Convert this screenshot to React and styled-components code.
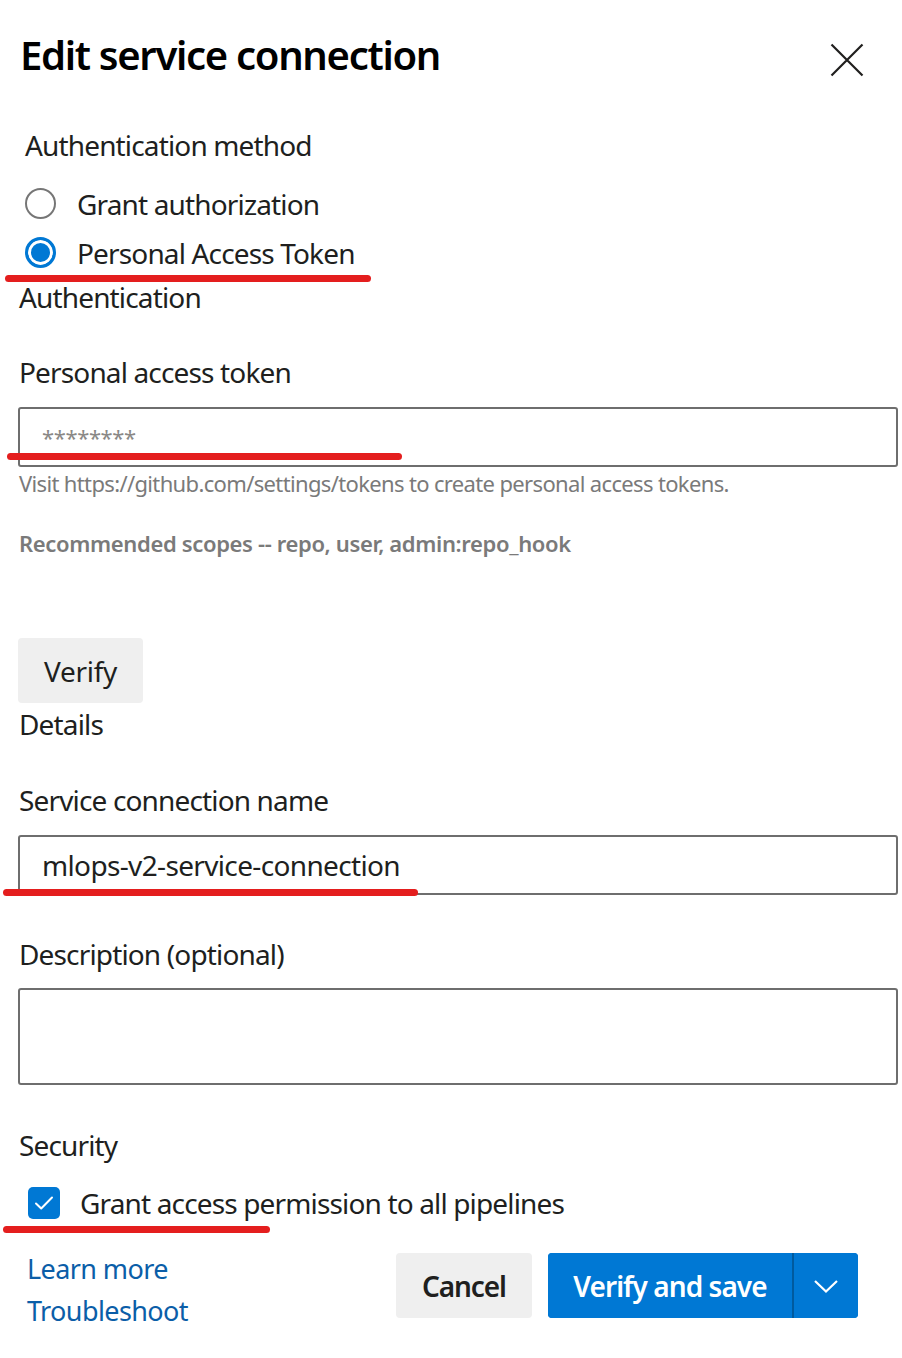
import React from "react";
import styled, { createGlobalStyle } from "styled-components";

const Global = createGlobalStyle`
  html, body { margin: 0; padding: 0; background: #ffffff; }
  body {
    font-family: "Noto Sans", "Open Sans", sans-serif;
    color: #201f1e;
    -webkit-font-smoothing: antialiased;
  }
  * { box-sizing: border-box; }
`;

const Panel = styled.div`
  width: 902px;
  min-height: 1358px;
  padding: 0 4px 0 18px;
  display: flex;
  flex-direction: column;
`;

const Header = styled.div`
  display: flex;
  align-items: flex-start;
  justify-content: space-between;
  padding-top: 31px;
  height: 80px;
`;

const Title = styled.h1`
  margin: 0 0 0 2px;
  font-size: 40px;
  line-height: 48px;
  font-weight: 600;
  color: #000;
  letter-spacing: -1.3px;
`;

const CloseButton = styled.button`
  border: 0;
  background: transparent;
  padding: 0;
  margin: 12px 34px 0 0;
  width: 34px;
  height: 34px;
  display: flex;
  align-items: center;
  justify-content: center;
  cursor: pointer;
`;

const Label = styled.div`
  font-size: 28px;
  line-height: 40px;
  color: #201f1e;
  margin-top: ${(p) => p.$top || 0}px;
  padding-left: ${(p) => p.$indent || 1}px;
  letter-spacing: -0.85px;
`;

const RadioGroup = styled.div`
  display: flex;
  flex-direction: column;
  margin-top: 14px;
  padding-left: 7px;
`;

const Mark = styled.span`
  position: absolute;
  left: ${(p) => p.$left}px;
  width: ${(p) => p.$width}px;
  bottom: ${(p) => p.$bottom}px;
  height: 7px;
  border-radius: 4px;
  background: #e41e1e;
  pointer-events: none;
`;

const RadioRow = styled.label`
  position: relative;
  display: flex;
  align-items: center;
  gap: 21px;
  height: 49px;
  font-size: 28px;
  color: #201f1e;
  letter-spacing: -0.85px;
`;

const RadioCircle = styled.span`
  width: 31px;
  height: 31px;
  border-radius: 50%;
  flex: none;
  border: ${(p) => (p.$checked ? "3px solid #0078d4" : "2px solid #767676")};
  background: ${(p) => (p.$checked ? "#0078d4" : "#fff")};
  box-shadow: ${(p) => (p.$checked ? "inset 0 0 0 3px #fff" : "none")};
`;

const Field = styled.div`
  position: relative;
  margin-top: ${(p) => p.$top || 0}px;
`;

const Input = styled.div`
  width: 880px;
  height: ${(p) => p.$height || 60}px;
  border: 2px solid #6e6e6e;
  border-radius: 3px;
  display: flex;
  align-items: center;
  padding-left: 22px;
  font-size: ${(p) => (p.$masked ? "22px" : "28px")};
  color: ${(p) => (p.$masked ? "#8a8886" : "#201f1e")};
  letter-spacing: ${(p) => (p.$masked ? "-0.4px" : "-0.65px")};
`;

const Helper = styled.div`
  font-size: 22px;
  line-height: 32px;
  color: #7a7a7a;
  padding-left: 1px;
  margin-top: ${(p) => p.$top || 0}px;
  font-weight: ${(p) => (p.$bold ? 600 : 400)};
  letter-spacing: ${(p) => (p.$bold ? "-0.35px" : "-0.65px")};
`;

const GrayButton = styled.button`
  border: 0;
  border-radius: 4px;
  background: #efefef;
  color: #201f1e;
  font-family: inherit;
  font-size: 28px;
  font-weight: ${(p) => (p.$bold ? 600 : 400)};
  height: 65px;
  padding: 0;
  width: ${(p) => p.$width}px;
  letter-spacing: ${(p) => (p.$bold ? "-1.1px" : "-0.3px")};
  cursor: pointer;
  align-self: flex-start;
  margin-top: ${(p) => p.$top || 0}px;
`;

const CheckRow = styled.div`
  position: relative;
  display: flex;
  align-items: center;
  gap: 20px;
  height: 40px;
  margin-top: 18px;
  padding-left: 10px;
  font-size: 28px;
  letter-spacing: -0.85px;
`;

const CheckBox = styled.span`
  width: 32px;
  height: 32px;
  border-radius: 5px;
  background: #0078d4;
  display: flex;
  align-items: center;
  justify-content: center;
  flex: none;
`;

const Footer = styled.div`
  display: flex;
  justify-content: space-between;
  align-items: flex-start;
  margin-top: 25px;
  padding-left: 9px;
  padding-right: 40px;
`;

const Links = styled.div`
  display: flex;
  flex-direction: column;
`;

const Link = styled.a`
  font-size: 27px;
  line-height: 42px;
  color: #0b5ea8;
  text-decoration: none;
  letter-spacing: -0.6px;
`;

const Actions = styled.div`
  display: flex;
  gap: 16px;
  margin-top: 5px;
`;

const Split = styled.div`
  display: flex;
  height: 65px;
  border-radius: 4px;
  overflow: hidden;
  background: #0078d4;
`;

const PrimaryButton = styled.button`
  border: 0;
  background: #0078d4;
  color: #fff;
  font-family: inherit;
  font-size: 28px;
  font-weight: 600;
  width: 246px;
  padding: 0;
  letter-spacing: -0.95px;
  border-right: 2px solid #005a9e;
  cursor: pointer;
`;

const ChevronButton = styled.button`
  border: 0;
  background: #0078d4;
  width: 64px;
  display: flex;
  align-items: center;
  justify-content: center;
  padding: 0;
  cursor: pointer;
`;

export default function App() {
  return (
    <>
      <Global />
      <Panel>
        <Header>
          <Title>Edit service connection</Title>
          <CloseButton aria-label="Close">
            <svg width="34" height="34" viewBox="0 0 34 34">
              <path d="M1.5 1.5 L32.5 32.5 M32.5 1.5 L1.5 32.5" stroke="#201f1e" strokeWidth="2.2" fill="none" />
            </svg>
          </CloseButton>
        </Header>

        <Label $top={45} $indent={7}>Authentication method</Label>
        <RadioGroup>
          <RadioRow>
            <RadioCircle />
            Grant authorization
          </RadioRow>
          <RadioRow>
            <RadioCircle $checked />
            Personal Access Token
            <Mark $left={-20} $width={366} $bottom={-5} />
          </RadioRow>
        </RadioGroup>

        <Label $top={0}>Authentication</Label>
        <Label $top={35}>Personal access token</Label>
        <Field $top={15}>
          <Input $masked>********</Input>
          <Mark $left={-11} $width={395} $bottom={7} />
        </Field>
        <Helper>Visit https://github.com/settings/tokens to create personal access tokens.</Helper>
        <Helper $top={28} $bold>Recommended scopes -- repo, user, admin:repo_hook</Helper>

        <GrayButton $top={79} $width={125}>Verify</GrayButton>
        <Label $top={1}>Details</Label>
        <Label $top={36}>Service connection name</Label>
        <Field $top={15}>
          <Input>mlops-v2-service-connection</Input>
          <Mark $left={-15} $width={415} $bottom={-1} />
        </Field>
        <Label $top={39}>Description (optional)</Label>
        <Field $top={14}>
          <Input $height={97} />
        </Field>
        <Label $top={40}>Security</Label>
        <CheckRow>
          <CheckBox>
            <svg width="20" height="16" viewBox="0 0 20 16">
              <path d="M2 8.5 L7.2 13.5 L18 2.5" stroke="#fff" strokeWidth="2" fill="none" strokeLinecap="round" strokeLinejoin="round" />
            </svg>
          </CheckBox>
          Grant access permission to all pipelines
          <Mark $left={-15} $width={267} $bottom={-10} />
        </CheckRow>

        <Footer>
          <Links>
            <Link href="#">Learn more</Link>
            <Link href="#">Troubleshoot</Link>
          </Links>
          <Actions>
            <GrayButton $bold $width={136}>Cancel</GrayButton>
            <Split>
              <PrimaryButton>Verify and save</PrimaryButton>
              <ChevronButton aria-label="More options">
                <svg width="26" height="16" viewBox="0 0 26 16">
                  <path d="M2 3 L13 13.5 L24 3" stroke="#fff" strokeWidth="2.2" fill="none" />
                </svg>
              </ChevronButton>
            </Split>
          </Actions>
        </Footer>
      </Panel>
    </>
  );
}
